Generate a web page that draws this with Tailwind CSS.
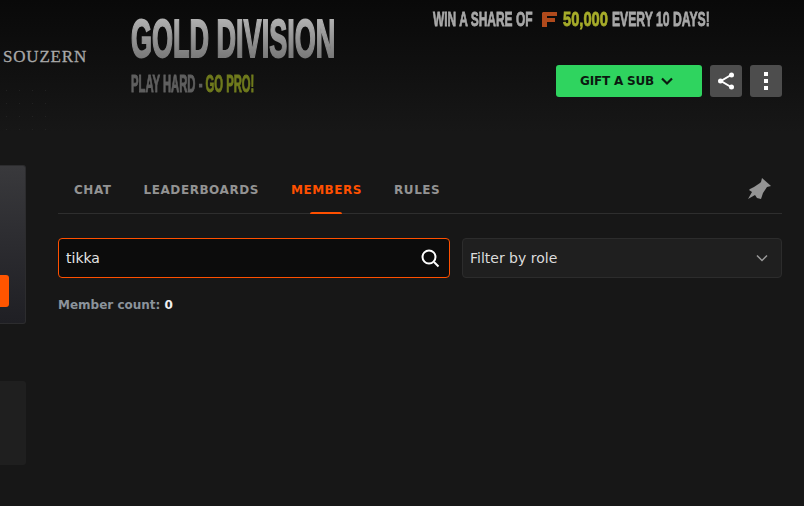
<!DOCTYPE html>
<html lang="en">
<head>
  <meta charset="UTF-8">
  <meta name="viewport" content="width=device-width, initial-scale=1.0">
  <title>Gold Division - Members</title>
  <script src="https://cdn.jsdelivr.net/npm/@tailwindcss/browser@4"></script>
</head>
<body class="bg-[#171717] h-[506px] overflow-hidden font-['DejaVu_Sans',sans-serif]">
  <!-- Hero -->
  <header class="h-[165px] flex bg-gradient-to-b from-[#090909] to-[#171717] to-80%">
    <div class="w-[131px] shrink-0 pt-[45px] pl-[3px]">
      <span class="font-['Liberation_Serif',serif] text-[#a9a9a9] text-[17px] leading-[20px] tracking-[0.8px] [-webkit-text-stroke:0.3px_#a9a9a9]">SOUZERN</span>
      <!-- faint dot texture -->
      <div class="w-[50px] h-[50px] -ml-[3px] mt-[15px] bg-[radial-gradient(#222222_0.5px,transparent_1px)] bg-[size:13px_13px]"></div>
    </div>

    <div class="w-[302px] shrink-0 pt-[13px] font-['Liberation_Sans',sans-serif] font-bold whitespace-nowrap">
      <div class="origin-left scale-x-[0.51] w-[410px] text-[53px] leading-[52px] text-transparent bg-clip-text bg-gradient-to-b from-[#bababa] to-[#6f6f6f] [-webkit-text-stroke:2px_transparent]">GOLD DIVISION</div>
      <div class="origin-left scale-x-[0.49] w-[260px] mt-[6px] text-[23px] leading-[26px] text-[#5f5f5f] [-webkit-text-stroke:1px_#5f5f5f]">PLAY HARD - <span class="text-[#6f7a1d] [-webkit-text-stroke:1px_#6f7a1d]">GO PRO!</span></div>
    </div>

    <div class="flex-1 pr-[22px]">
      <div class="h-[65px] pt-[7px]">
        <div class="flex items-center h-[24px] font-['Liberation_Sans',sans-serif] font-bold text-[21px] text-[#a8a8a8] whitespace-nowrap">
          <span class="origin-left scale-x-[0.57] w-[109px] [-webkit-text-stroke:0.8px_#a8a8a8]">WIN A SHARE OF</span>
          <svg class="w-[15px] h-[15px] mr-[6px]" viewBox="0 0 15 15"><path fill="#b04a1c" d="M1 0h14v4H5v2h8v4H5v5H0V1z"/></svg>
          <span class="origin-left scale-x-[0.7] w-[49px] text-[#a7ad2a] [-webkit-text-stroke:0.8px_#a7ad2a]">50,000</span>
          <span class="origin-left scale-x-[0.58] w-[97px] [-webkit-text-stroke:0.8px_#a8a8a8]">EVERY 10 DAYS!</span>
        </div>
      </div>
      <div class="flex justify-end gap-2">
        <button class="w-[146px] h-8 pl-6 rounded-[3px] bg-[#2fd45f] text-[#0b1a10] text-[12px] tracking-[-0.2px] font-semibold flex items-center gap-[7px]">
          GIFT A SUB
          <svg class="w-3 h-3" viewBox="0 0 12 12" fill="none" stroke="currentColor" stroke-width="2.200"><path d="M1 3.500l5 5 5-5"/></svg>
        </button>
        <button class="w-8 h-8 rounded-[3px] bg-[#4d4d4d] flex items-center justify-center">
          <svg class="w-5 h-5" viewBox="0 0 20 20" fill="#fff" stroke="#fff" stroke-width="2"><path d="M15 4L5 10l10 6" fill="none"/><circle cx="4.500" cy="10" r="2.500" stroke="none"/><circle cx="15.500" cy="16" r="2.500" stroke="none"/><circle cx="15.500" cy="4" r="2.500" stroke="none"/></svg>
        </button>
        <button class="w-8 h-8 rounded-[3px] bg-[#4d4d4d] flex flex-col items-center justify-center gap-[3px]">
          <span class="w-1 h-1 bg-white"></span>
          <span class="w-1 h-1 bg-white"></span>
          <span class="w-1 h-1 bg-white"></span>
        </button>
      </div>
    </div>
  </header>

  <div class="flex">
    <!-- Sidebar, cut off at the window edge -->
    <aside class="w-[26px] shrink-0">
      <div class="h-[159px] rounded-r-[3px] border border-l-0 border-[#2c2c2e] bg-gradient-to-b from-[#39393c] to-[#1f1f24] pt-[109px]">
        <div class="w-[9px] h-8 rounded-r-[3px] bg-[#ff5500]"></div>
      </div>
      <div class="h-[84px] mt-[57px] rounded-r-[3px] bg-[#1f1f1f]"></div>
    </aside>

    <main class="ml-8 mr-[22px] flex-1">
      <nav class="h-[49px] border-b border-[#2e2e2e] flex pl-4 gap-8 text-[12px] tracking-[0.55px] font-bold text-[#939393]">
        <a class="pt-[18px] leading-[15px]">CHAT</a>
        <a class="pt-[18px] leading-[15px]">LEADERBOARDS</a>
        <a class="pt-[18px] leading-[15px] text-[#ff5000] relative">MEMBERS
          <span class="absolute left-[19px] w-8 h-[2px] bottom-[-1px] rounded-t-[2px] bg-[#ff5000]"></span>
        </a>
        <a class="pt-[18px] leading-[15px]">RULES</a>
        <span class="ml-auto mr-[11px] mt-[13px]">
          <svg class="w-6 h-[22px]" viewBox="0 0 24 22" fill="#949494"><path d="M15 0l9 8-4 1-4 6-2 6-4-1-2-3-7 4 4-7-3-2 1-1 4-2 6-4 1-1z"/></svg>
        </span>
      </nav>

      <div class="flex gap-3 mt-6">
        <div class="w-[392px] h-10 rounded-[4px] border border-[#ff5000] bg-[#0c0c0c] flex items-center justify-between pl-[7px] pr-[9px]">
          <span class="text-[14px] pt-px text-[#e4e4e4]">tikka</span>
          <svg class="w-5 h-5" viewBox="0 0 20 20" fill="none" stroke="#fff" stroke-width="2"><circle cx="9" cy="9" r="6.500"/><path d="M14 14l4.500 4.500"/></svg>
        </div>
        <div class="flex-1 h-10 rounded-[4px] border border-[#2c2c2c] bg-[#1f1f1f] flex items-center justify-between pl-[7px] pr-[13px]">
          <span class="text-[14px] pt-px text-[#dcdcdc]">Filter by role</span>
          <svg class="w-3 h-3" viewBox="0 0 12 12" fill="none" stroke="#9a9a9a" stroke-width="1.500"><path d="M1 3.500l5 5 5-5"/></svg>
        </div>
      </div>

      <p class="mt-5 text-[12px] leading-[15px] font-bold text-[#8b939b]">Member count: <span class="text-[#f0f0f0]">0</span></p>
    </main>
  </div>
</body>
</html>
